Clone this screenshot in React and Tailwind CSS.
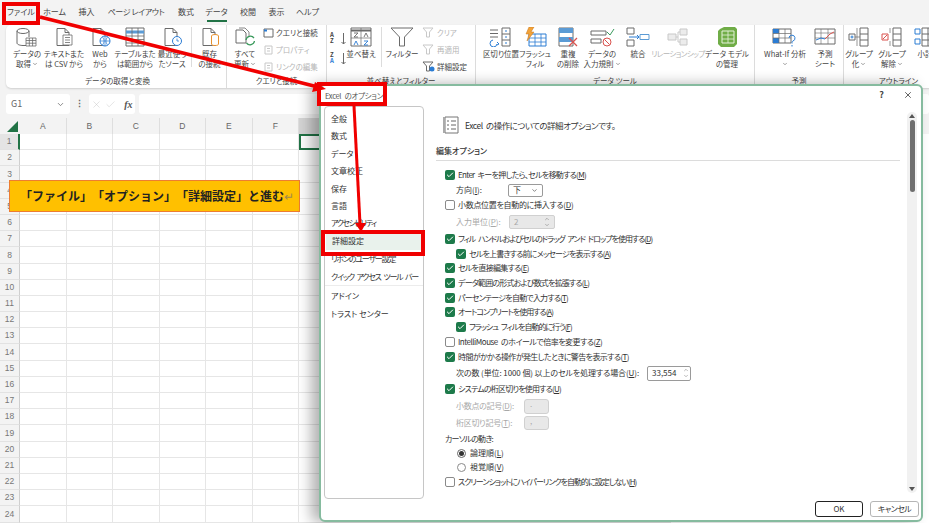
import React from "react";
import { Check, ChevronDown, ChevronUp, X } from "lucide-react";

const G = "#6a6a6a";
const BLUE = "#2b7cd3";

function Sheet({ children, c = G }) {
  return (
    <svg width="24" height="20" viewBox="0 0 24 20" fill="none">
      <path d="M5 1.500h8l4 4v13H5z" fill="#fff" stroke={c} />
      <path d="M13 1.500v4h4" stroke={c} />
      {children}
    </svg>
  );
}

const icons = {
  db: (
    <svg width="26" height="20" viewBox="0 0 26 20" fill="none">
      <ellipse cx="9" cy="4" rx="6" ry="2.500" stroke={G} fill="#fff" />
      <path d="M3 4v12c0 1.500 3 2.500 6 2.500h3M15 4v6" stroke={G} />
      <path d="M12 11h10v8H12zM12 13.500h10M12 16.200h10M15.300 11v8M18.600 11v8" stroke={G} fill="#fff" strokeWidth=".8" />
    </svg>
  ),
  csv: (
    <Sheet>
      <path d="M11 8h9v10h-9z" fill="#fff" stroke={G} strokeWidth=".8" />
      <path d="M13 10.500h5M13 13h5M13 15.500h5" stroke={G} strokeWidth=".8" />
    </Sheet>
  ),
  web: (
    <Sheet>
      <circle cx="17" cy="14" r="5" fill="#fff" stroke={BLUE} />
      <path d="M12 14h10M17 9v10M14.500 10c2 2.500 2 5.500 0 8M19.500 10c-2 2.500-2 5.500 0 8" stroke={BLUE} strokeWidth=".7" />
    </Sheet>
  ),
  table: (
    <svg width="24" height="20" viewBox="0 0 24 20" fill="none">
      <path d="M3 1h18v18H3z" fill="#fff" stroke={G} />
      <path d="M3 5h18" stroke="#5b9bd5" strokeWidth="3" />
      <path d="M3 9h18M3 12.500h18M3 16h18M9 1v18M15 1v18" stroke={G} strokeWidth=".8" />
    </svg>
  ),
  recent: (
    <Sheet>
      <circle cx="17" cy="14" r="4.500" fill="#fff" stroke={BLUE} />
      <path d="M17 11.500V14h2" stroke={BLUE} strokeWidth=".8" />
    </Sheet>
  ),
  conn: (
    <Sheet>
      <ellipse cx="17" cy="9" rx="3.500" ry="1.500" fill="#fff" stroke="#e8912d" />
      <path d="M13.500 9v8c0 1 1.500 1.500 3.500 1.500s3.500-.5 3.500-1.500V9" fill="#fff" stroke="#e8912d" />
    </Sheet>
  ),
  refresh: (
    <svg width="24" height="20" viewBox="0 0 24 20" fill="none">
      <path d="M3 3h7l3 3v10H3z" fill="#fff" stroke={G} />
      <path d="M6 1h6l4 4v4" stroke={G} strokeWidth=".8" />
      <path d="M13 13a4.500 4.500 0 0 1 8-2M21.500 14a4.500 4.500 0 0 1-8 2" stroke="#3a9a5c" strokeWidth="1.300" />
    </svg>
  ),
  sortTile: (
    <svg width="22" height="20" viewBox="0 0 22 20" fill="none">
      <path d="M1 1h20v18H1z" fill="#fff" stroke={G} />
      <path d="M1 3.500h20" stroke={G} strokeWidth="2" />
      <path d="M11 1v18M1 11h20" stroke={G} strokeWidth=".7" />
      <path d="M4 6h4l-4 4h4M14 10l2-4 2 4" stroke={G} strokeWidth=".9" />
      <path d="M4 18l2-4 2 4M14 14h4l-4 4h4" stroke={BLUE} strokeWidth=".9" />
    </svg>
  ),
  funnel: (
    <svg width="26" height="20" viewBox="0 0 26 20" fill="none">
      <path d="M2 1h22l-8.500 9v9h-5v-9z" fill="#fff" stroke={G} />
    </svg>
  ),
  split: (
    <svg width="28" height="20" viewBox="0 0 28 20" fill="none">
      <path d="M3 3h8M3 6.500h8M3 10h8" stroke={G} />
      <path d="M15 1h8v18h-8zM15 7h8M15 13h8" fill="#fff" stroke={G} />
      <path d="M18 4h2M18 10h2M18 16h2" stroke={BLUE} />
      <path d="M6 13a3.500 3.500 0 1 0 4 4" stroke={BLUE} />
      <path d="M10 15l2 2-2 1" stroke={BLUE} />
    </svg>
  ),
  flash: (
    <svg width="26" height="20" viewBox="0 0 26 20" fill="none">
      <path d="M7 7h17v12H7z" fill="#fff" stroke={BLUE} />
      <path d="M7 11h17M7 15h17M13 7v12M19 7v12" stroke={BLUE} strokeWidth=".8" />
      <path d="M7 0h5L9 5h3l-7 9 2-7H4z" fill="#f2a33a" stroke="#c9761a" strokeWidth=".5" />
    </svg>
  ),
  dedupe: (
    <svg width="24" height="20" viewBox="0 0 24 20" fill="none">
      <path d="M3 1h14v18H3z" fill="#fff" stroke={G} />
      <path d="M3 1h14v5H3zM3 10h14v5H3z" fill="#5b9bd5" />
      <path d="M13 11l8 8M21 11l-8 8" stroke="#d9534f" strokeWidth="1.300" />
    </svg>
  ),
  valid: (
    <svg width="26" height="20" viewBox="0 0 26 20" fill="none">
      <path d="M2 4h15v4H2zM2 12h10v4H2z" fill="#fff" stroke={G} />
      <path d="M18 5l3 3 4-6" stroke="#3a9a5c" />
      <circle cx="18" cy="15" r="4" fill="#fff" stroke="#d9534f" />
      <path d="M15.500 12.500l5 5" stroke="#d9534f" />
    </svg>
  ),
  merge: (
    <svg width="26" height="20" viewBox="0 0 26 20" fill="none">
      <path d="M2 1h7v6H2zM2 13h7v6H2z" fill="#fff" stroke={G} />
      <path d="M4 10h10" stroke={BLUE} />
      <path d="M12 8l2 2-2 2" stroke={BLUE} />
      <path d="M15 7.500h9v5h-9z" fill="#fff" stroke="#5b9bd5" />
    </svg>
  ),
  rel: (
    <svg width="26" height="20" viewBox="0 0 26 20" fill="none" stroke="#c8c8c8">
      <path d="M15 2h7v6h-7zM15 12h7v6h-7zM3 7h8v6H3z" fill="#ececec" />
      <path d="M11 10h2M13 5v10M13 5h2M13 15h2" />
    </svg>
  ),
  model: (
    <svg width="24" height="20" viewBox="0 0 24 20" fill="none">
      <path d="M5 2l4-2h11l2 2v15l-3 3H6l-3-3V4z" fill="#70ad47" />
      <path d="M7 4h12v12H7z" stroke="#e6f2dc" />
      <path d="M13 4v12M7 8h12M7 12h12" stroke="#e6f2dc" strokeWidth=".8" />
    </svg>
  ),
  whatif: (
    <svg width="28" height="20" viewBox="0 0 28 20" fill="none">
      <path d="M2 2h18v14H2z" fill="#fff" stroke={G} />
      <path d="M2 2h6v4.500H2zM2 11h6v5H2z" fill={BLUE} />
      <path d="M2 6.500h18M2 11h18M8 2v14M14 2v14" stroke={G} strokeWidth=".7" />
      <path d="M18 11a3 3 0 1 1 4 3c-1 .5-1 1-1 2.500M21 18v1.500" stroke={BLUE} />
    </svg>
  ),
  forecast: (
    <svg width="26" height="20" viewBox="0 0 26 20" fill="none">
      <path d="M3 2h20v15H3z" fill="#fff" stroke={G} />
      <path d="M3 6h20M3 11h20M9 2v15M16 2v15" stroke={G} strokeWidth=".6" />
      <path d="M4 13l5-2 4 1" stroke={BLUE} />
      <path d="M13 12l5-5 4-2" stroke="#d9534f" />
    </svg>
  ),
  groupOn: (
    <svg width="24" height="20" viewBox="0 0 24 20" fill="none">
      <path d="M13 1h8v18h-8zM13 7h8M13 13h8" stroke={G} />
      <path d="M2 7h6v6H2z" fill="#fff" stroke={G} />
      <path d="M3.500 10h3M5 8.500v3" stroke={BLUE} />
      <path d="M8 10h5M10 1v18" stroke={G} strokeWidth=".7" />
    </svg>
  ),
  groupOff: (
    <svg width="24" height="20" viewBox="0 0 24 20" fill="none">
      <path d="M13 1h8v18h-8zM13 7h8M13 13h8" stroke={G} />
      <path d="M2 7h6v6H2z" fill="#fff" stroke="#d9534f" />
      <path d="M3 12l4-4" stroke="#d9534f" />
      <path d="M10 1v5M10 14v5" stroke={G} strokeWidth=".7" />
    </svg>
  ),
  subtotal: (
    <svg width="24" height="20" viewBox="0 0 24 20" fill="none">
      <path d="M9 1h16v18H9zM9 7h16M9 13h16M15 1v18" stroke={G} />
      <path d="M2 2h5v5H2zM2 12h5v5H2z" fill="#fff" stroke={BLUE} />
    </svg>
  ),
  tiny: (
    <svg width="11" height="10" viewBox="0 0 11 10" fill="none">
      <path d="M1 1h9v8H1z" stroke={G} />
      <path d="M1 2.500h3" stroke={BLUE} strokeWidth="2" />
    </svg>
  ),
  tinyOff: (
    <svg width="11" height="10" viewBox="0 0 11 10" fill="none">
      <path d="M2 1h7v8H2zM4 3.500h3M4 6h3" stroke="#c8c8c8" />
    </svg>
  ),
  tinyFunnel: (
    <svg width="13" height="11" viewBox="0 0 13 11" fill="none">
      <path d="M1 1h10L7.500 5v5h-3V5z" stroke="#c8c8c8" />
    </svg>
  ),
  tinyFunnelOn: (
    <svg width="13" height="11" viewBox="0 0 13 11" fill="none">
      <path d="M1 1h10L7.500 5v5h-3V5z" stroke={G} />
      <circle cx="10" cy="8" r="2.500" fill={BLUE} />
    </svg>
  ),
  az: (
    <svg width="14" height="14" viewBox="0 0 14 14" fill="none">
      <path d="M10.500 1v11M8.500 10l2 2 2-2" stroke={G} />
    </svg>
  ),
};

function Tool({ w, icon, lines, arrow, off, tr = "" }) {
  return (
    <div className={`${w} flex flex-col items-center shrink-0 ${off ? "text-[#b5b5b5]" : "text-[#444]"}`}>
      <div className="h-[20px] flex items-center">{icons[icon]}</div>
      <div className={`mt-[2px] text-[7.5px] leading-[10px] text-center whitespace-nowrap ${tr}`}>
        {lines.map((l, i) => (
          <div key={i} className="flex items-center justify-center gap-[1px] h-[10px]">
            {l}
            {arrow && i === lines.length - 1 && <ChevronDown size={6} />}
          </div>
        ))}
      </div>
    </div>
  );
}

function Small({ icon, label, off }) {
  return (
    <div className={`h-[17px] flex items-center gap-[2px] text-[7.5px] whitespace-nowrap ${off ? "text-[#b5b5b5]" : "text-[#444]"}`}>
      {icons[icon]}
      {label}
    </div>
  );
}

function Group({ w, label, children }) {
  return (
    <div className={`${w} shrink-0 h-full flex flex-col border-r border-[#dcdcdc]`}>
      <div className="flex-1 flex pt-[2px]">{children}</div>
      <div className="h-[13px] text-center text-[7.5px] leading-[11px] text-[#444] whitespace-nowrap overflow-hidden">{label}</div>
    </div>
  );
}

function Ribbon() {
  return (
    <div className="ml-[6px] w-[960px] h-[63px] bg-white rounded-[5px] flex pl-[3px] shadow-[0_1px_2px_rgba(0,0,0,0.15)] overflow-hidden">
      <Group w="w-[218px]" label="データの取得と変換">
        <Tool w="w-[36px]" icon="db" lines={["データの", "取得"]} arrow />
        <Tool w="w-[38px]" icon="csv" lines={["テキストまた", "は CSV から"]} />
        <Tool w="w-[34px]" icon="web" lines={["Web", "から"]} />
        <Tool w="w-[36px]" icon="table" lines={["テーブルまた", "は範囲から"]} />
        <Tool w="w-[38px]" icon="recent" lines={["最近使っ", "たソース"]} />
        <div className="w-px h-[40px] bg-[#dcdcdc] shrink-0" />
        <Tool w="w-[35px]" icon="conn" lines={["既存", "の接続"]} />
      </Group>
      <Group w="w-[100px]" label="クエリと接続">
        <Tool w="w-[36px]" icon="refresh" lines={["すべて", "更新"]} arrow />
        <div className="flex flex-col -mt-[3px]">
          <Small icon="tiny" label="クエリと接続" />
          <Small icon="tinyOff" label="プロパティ" off />
          <Small icon="tinyOff" label="リンクの編集" off />
        </div>
      </Group>
      <Group w="w-[149px]" label="並べ替えとフィルター">
        <div className="w-[18px] pl-[3px] shrink-0 flex flex-col gap-[6px] pt-[5px] text-[6px] leading-[6px] font-bold text-[#444]">
          <div className="relative h-[14px]">A<br />Z<div className="absolute left-[3px] top-0">{icons.az}</div></div>
          <div className="relative h-[14px]">Z<br /><span className="text-[#2b7cd3]">A</span><div className="absolute left-[3px] top-0">{icons.az}</div></div>
        </div>
        <Tool w="w-[32px]" icon="sortTile" lines={["並べ替え"]} />
        <div className="w-px h-[40px] bg-[#dcdcdc] ml-[4px] shrink-0" />
        <Tool w="w-[40px]" icon="funnel" lines={["フィルター"]} />
        <div className="flex flex-col -mt-[3px]">
          <Small icon="tinyFunnel" label="クリア" off />
          <Small icon="tinyFunnel" label="再適用" off />
          <Small icon="tinyFunnelOn" label="詳細設定" />
        </div>
      </Group>
      <Group w="w-[279px]" label="データ ツール">
        <Tool w="w-[34px] ml-[8px]" icon="split" lines={["区切り位置"]} />
        <Tool w="w-[34px]" icon="flash" lines={["フラッシュ", "フィル"]} />
        <Tool w="w-[32px]" icon="dedupe" lines={["重複", "の削除"]} />
        <Tool w="w-[36px]" icon="valid" lines={["データの", "入力規則"]} arrow />
        <Tool w="w-[36px]" icon="merge" lines={["統合"]} />
        <Tool w="w-[44px]" icon="rel" lines={["リレーションシップ"]} off tr="tracking-[-0.6px]" />
        <Tool w="w-[54px]" icon="model" lines={["データ モデル", "の管理"]} />
      </Group>
      <Group w="w-[89px]" label="予測">
        <Tool w="w-[46px] ml-[7px]" icon="whatif" lines={["What-If 分析", ""]} arrow />
        <Tool w="w-[34px]" icon="forecast" lines={["予測", "シート"]} />
      </Group>
      <Group w="w-[110px]" label="アウトライン">
        <Tool w="w-[30px]" icon="groupOn" lines={["グループ", "化"]} arrow />
        <Tool w="w-[36px]" icon="groupOff" lines={["グループ", "解除"]} arrow />
        <Tool w="w-[30px]" icon="subtotal" lines={["小計"]} />
      </Group>
    </div>
  );
}

function FormulaBar() {
  return (
    <div className="mt-[6px] h-[20px] flex items-stretch pl-[6px] gap-[4px] text-[#666]">
      <div className="w-[65px] bg-white rounded-[3px] flex items-center justify-between px-[5px] text-[9px]">
        G1 <ChevronDown size={9} />
      </div>
      <div className="w-[11px] flex items-center justify-center text-[9px] font-bold">⋮</div>
      <div className="w-[46px] bg-white rounded-[3px] flex items-center pl-[2px] gap-[3px] text-[#c4c4c4]">
        <X size={11} strokeWidth={1} />
        <Check size={11} strokeWidth={1} />
        <span className="ml-[5px] font-['Liberation_Serif',serif] italic font-bold text-[10px] text-[#555]">fx</span>
      </div>
      <div className="w-[800px] bg-white rounded-[3px]" />
    </div>
  );
}

// only A-F show, the rest of the header sits behind the dialog
const COLS = ["A", "B", "C", "D", "E", "F", "", "", "", "", "", "", "", ""];
const ROWS = Array.from({ length: 24 }, (_, i) => i + 1);

function Grid() {
  return (
    <div className="mt-[4px] font-['Liberation_Sans',sans-serif]">
      <div className="h-[16px] flex bg-[#f3f3f3] text-[8.5px] text-[#666]">
        <div className="w-[20px] relative shrink-0">
          <div className="absolute right-[2px] bottom-[2px] w-0 h-0 border-l-[11px] border-l-transparent border-b-[11px] border-b-[#217346]" />
        </div>
        {COLS.map((c, i) => (
          <div key={i} className={`w-[46.5px] shrink-0 flex items-center justify-center border-r border-[#dedede] ${i === 6 ? "bg-[#d4d4d4]" : ""}`}>
            {c}
          </div>
        ))}
      </div>
      {ROWS.map((r) => (
        <div key={r} className="h-[16.2px] flex bg-white">
          <div className={`w-[20px] shrink-0 flex items-center justify-center text-[8.5px] text-[#777] border-b border-[#e2e2e2] ${r === 1 ? "border-r-2 border-r-[#217346] bg-[#e4e4e4]" : "border-r border-r-[#cfcfcf] bg-[#f3f3f3]"}`}>
            {r}
          </div>
          {COLS.map((c, i) => (
            <div key={i} className={`w-[46.5px] shrink-0 ${r === 1 && i === 6 ? "border-2 border-[#217346]" : "border-r border-b border-[#e6e6e6]"}`} />
          ))}
        </div>
      ))}
    </div>
  );
}

function Box({ checked }) {
  return checked ? (
    <span className="w-[10px] h-[10px] rounded-[2px] bg-[#1d7a4a] flex items-center justify-center shrink-0">
      <Check size={8} strokeWidth={3} color="#fff" />
    </span>
  ) : (
    <span className="w-[10px] h-[10px] rounded-[2px] bg-white border border-[#8a8a8a] shrink-0" />
  );
}

function Label({ t, k, after = "", tr = "" }) {
  return (
    <span className={`whitespace-nowrap ${tr}`}>
      {t}(<u>{k}</u>){after}
    </span>
  );
}

function Opt({ h, checked, indent, t, k, tr }) {
  return (
    <div className={`${h} flex items-center gap-[3px] ${indent ? "pl-[20px]" : "pl-[9px]"}`}>
      <Box checked={checked} />
      <Label t={t} k={k} tr={tr} />
    </div>
  );
}

function Spin() {
  return (
    <span className="flex flex-col text-[#777]">
      <ChevronUp size={6} />
      <ChevronDown size={6} />
    </span>
  );
}

function Options() {
  return (
    <div className="flex flex-col text-[8px] leading-none text-[#333]">
      <Opt h="h-[15px]" checked t="Enter キーを押したら、セルを移動する" k="M" tr="tracking-[-0.7px] [word-spacing:2px]" />
      <div className="h-[16px] flex items-center pl-[20px]">
        <span className="w-[52px]"><Label t="方向" k="I" after=":" /></span>
        <span className="w-[35px] h-[13px] border border-[#9a9a9a] rounded-[2px] flex items-center justify-between px-[4px]">下 <ChevronDown size={7} /></span>
      </div>
      <Opt h="h-[14px]" t="小数点位置を自動的に挿入する" k="D" tr="tracking-[-0.3px]" />
      <div className="h-[19px] flex items-center pl-[20px] text-[#a8a8a8]">
        <span className="w-[53px]"><Label t="入力単位" k="P" after=":" /></span>
        <span className="w-[46px] h-[14px] bg-[#e8e8e8] border border-[#d0d0d0] rounded-[2px] flex items-center justify-between px-[4px]">2 <Spin /></span>
      </div>
      <Opt h="h-[15px]" checked t="フィル ハンドルおよびセルのドラッグ アンド ドロップを使用する" k="D" tr="tracking-[-1px] [word-spacing:2px]" />
      <Opt h="h-[15px]" checked indent t="セルを上書きする前にメッセージを表示する" k="A" tr="tracking-[-0.8px]" />
      <Opt h="h-[14px]" checked t="セルを直接編集する" k="E" tr="tracking-[-0.7px]" />
      <Opt h="h-[16px]" checked t="データ範囲の形式および数式を拡張する" k="L" tr="tracking-[-0.8px]" />
      <Opt h="h-[14px]" checked t="パーセンテージを自動で入力する" k="T" tr="tracking-[-0.8px]" />
      <Opt h="h-[14px]" checked t="オートコンプリートを使用する" k="A" tr="tracking-[-1px]" />
      <Opt h="h-[16px]" checked indent t="フラッシュ フィルを自動的に行う" k="F" tr="tracking-[-1px] [word-spacing:2px]" />
      <Opt h="h-[14px]" t="IntelliMouse のホイールで倍率を変更する" k="Z" tr="tracking-[-0.5px] [word-spacing:2px]" />
      <Opt h="h-[16px]" checked t="時間がかかる操作が発生したときに警告を表示する" k="T" tr="tracking-[-0.6px]" />
      <div className="h-[16px] flex items-center pl-[20px]">
        <span className="w-[191px]"><Label t="次の数 (単位: 1000 個) 以上のセルを処理する場合" k="U" after=":" tr="tracking-[-0.1px]" /></span>
        <span className="w-[44px] h-[15px] border border-[#9a9a9a] rounded-[2px] flex items-center justify-between pl-[4px] pr-[1px]">33,554 <Spin /></span>
      </div>
      <Opt h="h-[16px]" checked t="システムの桁区切りを使用する" k="U" tr="tracking-[-0.8px]" />
      <div className="h-[18px] flex items-center pl-[20px] text-[#a8a8a8]">
        <span className="w-[68px]"><Label t="小数点の記号" k="D" after=":" tr="tracking-[-0.3px]" /></span>
        <span className="w-[25px] h-[15px] bg-[#e8e8e8] border border-[#d0d0d0] rounded-[3px] pl-[5px]">.</span>
      </div>
      <div className="h-[16px] flex items-center pl-[20px] text-[#a8a8a8]">
        <span className="w-[68px]"><Label t="桁区切り記号" k="T" after=":" tr="tracking-[-0.3px]" /></span>
        <span className="w-[25px] h-[14px] bg-[#e8e8e8] border border-[#d0d0d0] rounded-[3px] pl-[5px]">,</span>
      </div>
      <div className="h-[16px] flex items-center pl-[9px] tracking-[-0.8px]">カーソルの動き:</div>
      <div className="h-[12px] flex items-center gap-[4px] pl-[21px]">
        <span className="w-[9px] h-[9px] rounded-full border border-[#666] flex items-center justify-center">
          <span className="w-[5px] h-[5px] rounded-full bg-[#333]" />
        </span>
        <Label t="論理順" k="L" />
      </div>
      <div className="h-[16px] flex items-center gap-[4px] pl-[21px]">
        <span className="w-[9px] h-[9px] rounded-full border border-[#8a8a8a] bg-white" />
        <Label t="視覚順" k="V" />
      </div>
      <Opt h="h-[13px]" t="スクリーンショットにハイパーリンクを自動的に設定しない" k="H" tr="tracking-[-1px]" />
    </div>
  );
}

function Nav() {
  const items = [
    ["全般", "h-[17.5px]", ""], ["数式", "h-[17.5px]", ""], ["データ", "h-[17.5px]", ""], ["文章校正", "h-[17.5px]", ""],
    ["保存", "h-[17.5px]", ""], ["言語", "h-[17.5px]", ""], ["アクセシビリティ", "h-[16px]", "tracking-[-1.4px]"],
  ];
  return (
    <div className="w-[100px] h-[393px] mt-[20px] border border-[#c6c6c6] rounded-[4px] bg-white pt-[3px] text-[8px] text-[#333] shrink-0">
      {items.map(([l, h, tr]) => (
        <div key={l} className={`${h} flex items-center pl-[6px] whitespace-nowrap ${tr}`}>{l}</div>
      ))}
      <div className="h-[19px] bg-[#e9f2ec] flex items-center pl-[6px] mx-px">詳細設定</div>
      <div className="h-[18px] flex items-center pl-[6px] tracking-[-1.2px] whitespace-nowrap">リボンのユーザー設定</div>
      <div className="h-[18px] flex items-center pl-[6px] whitespace-nowrap tracking-[-1.2px] [word-spacing:2px] border-b border-[#ececec]">クイック アクセス ツール バー</div>
      <div className="h-[19px] flex items-center pl-[6px]">アドイン</div>
      <div className="h-[17px] flex items-center pl-[6px]">トラスト センター</div>
    </div>
  );
}

function Dialog() {
  return (
    <div className="absolute left-[319px] top-[84px] w-[604px] h-[438px] bg-white border-2 border-[#86bb9f] rounded-[6px] shadow-[-8px_0_14px_rgba(0,0,0,0.3)] flex pl-[3px]">
      <Nav />
      <div className="flex-1 min-w-0 flex flex-col pl-[12px] relative">
        <div className="h-[32px] mt-[23px] pl-[7px] flex items-center gap-[6px] text-[8.5px] text-[#333] tracking-[-0.5px] [word-spacing:2px]">
          <svg width="16" height="18" viewBox="0 0 16 18" fill="none">
            <path d="M2 1h13v16H2z" fill="#fff" stroke="#777" />
            <path d="M1 1v16" stroke="#aaa" strokeWidth="2" />
            <path d="M4 5h2M8 5h5M4 9h2M8 9h5M4 13h2M8 13h5" stroke="#666" />
          </svg>
          <span>Excel の操作についての詳細オプションです。</span>
        </div>
        <div className="mt-[2px] h-[18px] w-[464px] flex items-center text-[8px] font-medium text-[#333] border-b border-[#dcdcdc] pb-[2px]">編集オプション</div>
        <div className="mt-[6px]">
          <Options />
        </div>
      </div>
      <div className="absolute right-[4px] top-[26px] w-[10px] h-[381px] bg-[#f1f1f1] rounded-[5px] flex flex-col items-center pt-[2px]">
        <span className="w-0 h-0 border-x-[3px] border-x-transparent border-b-[4px] border-b-[#555]" />
        <span className="mt-[2px] w-[5px] h-[72px] bg-[#6e6e6e] rounded-[3px]" />
        <span className="mt-auto mb-[2px] w-0 h-0 border-x-[3px] border-x-transparent border-t-[4px] border-t-[#555]" />
      </div>
      <div className="absolute right-[2px] bottom-[3px] flex gap-[7px] text-[8px] text-[#333]">
        <button className="w-[48px] h-[16px] border-[1.5px] border-[#222] rounded-[3px] flex items-center justify-center">OK</button>
        <button className="w-[49px] h-[16px] border border-[#b5b5b5] rounded-[3px] flex items-center justify-center tracking-[-0.6px]">キャンセル</button>
      </div>
      <div className="absolute right-[8px] top-[2px] flex items-center gap-[19px] text-[#444]">
        <span className="text-[9px] font-bold">?</span>
        <X size={10} />
      </div>
      <span className="absolute left-[4px] top-[4px] text-[7.5px] text-[#555] whitespace-nowrap tracking-[-0.3px] [word-spacing:2px]">Excel のオプション</span>
    </div>
  );
}

export default function App() {
  const tabs = [
    ["ファイル", "w-[32px] ml-[5px]"], ["ホーム", "w-[35px]"], ["挿入", "w-[29px]"], ["ページ レイアウト", "w-[70px] tracking-[-0.4px]"],
    ["数式", "w-[30px]"], ["データ", "w-[31px]"], ["校閲", "w-[32px]"], ["表示", "w-[25px]"], ["ヘルプ", "w-[37px]"],
  ];
  return (
    <div className="relative w-[929px] h-[523px] overflow-hidden bg-[#f3f3f3] font-['Noto_Sans_CJK_JP','Noto_Sans',sans-serif] [font-feature-settings:'palt']">
      <div className="h-[25px] flex items-center pb-[1px] text-[8px] text-[#444]">
        {tabs.map(([l, w]) => (
          <div key={l} className={`${w} h-full flex flex-col items-center justify-center relative whitespace-nowrap`}>
            {l}
            {l === "データ" && <span className="absolute bottom-[2px] w-[20px] h-[2px] bg-[#217346]" />}
          </div>
        ))}
      </div>
      <Ribbon />
      <FormulaBar />
      <Grid />

      <div className="absolute left-[9px] top-[180px] w-[291px] h-[32px] bg-[#ffc000] border border-[#ed7d31] flex items-center pl-[10px] text-[12px] font-bold text-[#222] [font-feature-settings:normal] [text-spacing-trim:space-all] whitespace-nowrap">
        「ファイル」「オプション」「詳細設定」と進む<span className="text-[#a08a50] font-normal">↵</span>
      </div>

      <Dialog />

      <div className="absolute left-[2px] top-[2px] w-[38px] h-[23px] border-[4px] border-[#f00000]" />
      <div className="absolute left-[317px] top-[82px] w-[70px] h-[24px] border-[4px] border-[#f00000]" />
      <div className="absolute left-[321px] top-[230px] w-[104px] h-[26px] border-[4px] border-[#f00000]" />

      <svg className="absolute left-0 top-0 pointer-events-none" width="929" height="523" viewBox="0 0 929 523" fill="none">
        <path d="M40 17L318 87" stroke="#f00000" strokeWidth="3.500" />
        <path d="M326 89L312 92L315 82Z" fill="#f00000" />
        <path d="M354 106L360 224" stroke="#f00000" strokeWidth="3" />
        <path d="M361 232L355 223L366 223Z" fill="#f00000" />
      </svg>
    </div>
  );
}
